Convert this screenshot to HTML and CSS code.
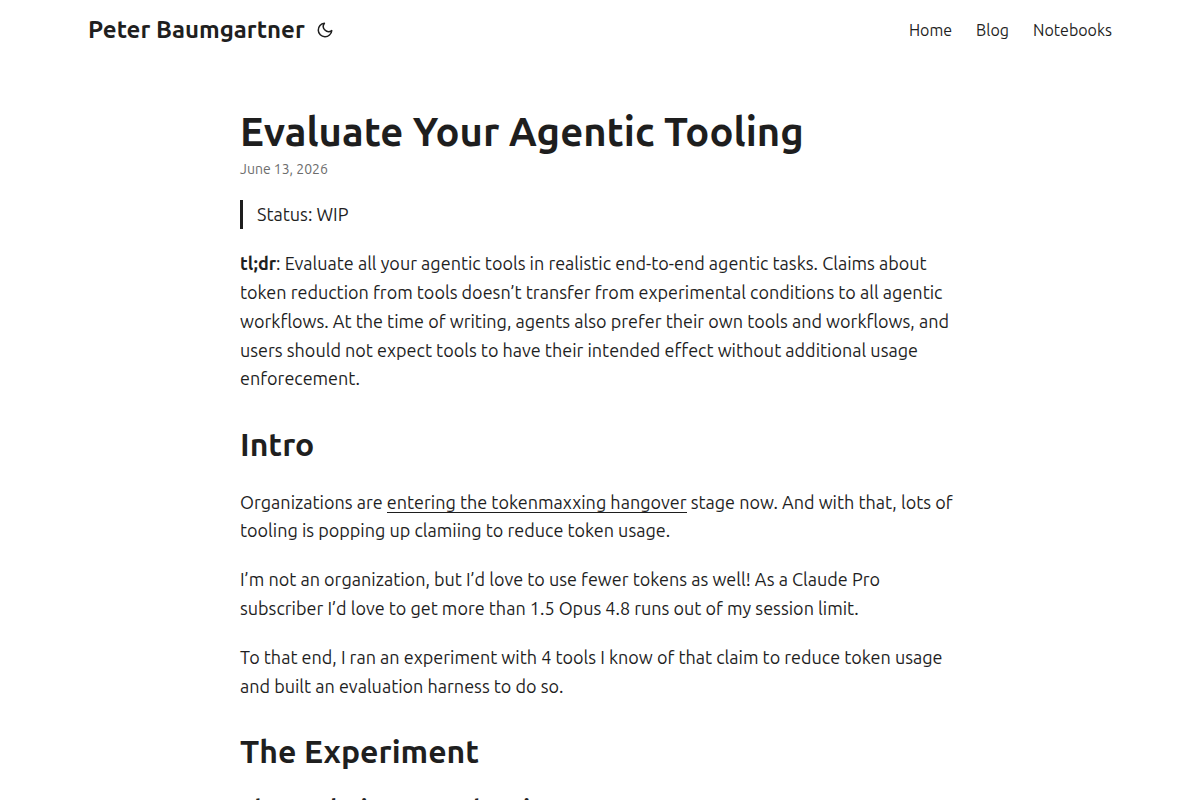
FILE: index.html
```html
<!DOCTYPE html>
<html lang="en">
<head>
<meta charset="utf-8">
<meta name="viewport" content="width=device-width, initial-scale=1">
<title>Evaluate Your Agentic Tooling | Peter Baumgartner</title>
<link rel="stylesheet" href="styles.css">
</head>
<body>
<header class="header">
  <nav class="nav">
    <div class="logo">
      <a class="logo-link" href="#">Peter Baumgartner</a>
      <button class="theme-toggle" type="button" aria-label="Toggle theme">
        <svg width="18" height="18" viewBox="0 0 24 24" fill="none" stroke="currentColor" stroke-width="2" stroke-linecap="round" stroke-linejoin="round" aria-hidden="true"><path d="M21 12.79A9 9 0 1 1 11.21 3 7 7 0 0 0 21 12.79z"/></svg>
      </button>
    </div>
    <ul class="menu">
      <li><a href="#">Home</a></li>
      <li><a href="#">Blog</a></li>
      <li><a href="#">Notebooks</a></li>
    </ul>
  </nav>
</header>
<main class="main">
  <article>
    <header class="post-header">
      <h1 class="post-title">Evaluate Your Agentic Tooling</h1>
      <div class="post-meta"><time datetime="2026-06-13">June 13, 2026</time></div>
    </header>
    <div class="post-content">
      <blockquote><p>Status: WIP</p></blockquote>
      <p><strong>tl;dr</strong>: Evaluate all your agentic tools in realistic end-to-end agentic tasks. Claims about token reduction from tools doesn’t transfer from experimental conditions to all agentic workflows. At the time of writing, agents also prefer their own tools and workflows, and users should not expect tools to have their intended effect without additional usage enforecement.</p>
      <h2>Intro</h2>
      <p>Organizations are <a href="#">entering the tokenmaxxing hangover</a> stage now. And with that, lots of tooling is popping up clamiing to reduce token usage.</p>
      <p>I’m not an organization, but I’d love to use fewer tokens as well! As a Claude Pro subscriber I’d love to get more than 1.5 Opus 4.8 runs out of my session limit.</p>
      <p>To that end, I ran an experiment with 4 tools I know of that claim to reduce token usage and built an evaluation harness to do so.</p>
      <h2>The Experiment</h2>
      <h3>The Ranks in Agents hosting</h3>
    </div>
  </article>
</main>
</body>
</html>
```
FILE: styles.css
```css
*, *::before, *::after { box-sizing: border-box; }
body {
  margin: 0;
  background: #fff;
  color: #1f1f1f;
  font: 18px/1.6 Ubuntu, "Noto Sans", "Open Sans", sans-serif;
  height: 100vh;
  overflow: hidden;
}
h1, h2, h3, p, ul, blockquote { margin: 0; padding: 0; }
a { color: inherit; text-decoration: none; }
.nav {
  display: flex;
  justify-content: space-between;
  align-items: center;
  max-width: 1072px;
  margin: 0 auto;
  padding: 0 24px;
  line-height: 60px;
}
.logo { display: flex; align-items: center; gap: 11px; }
.logo-link { font-size: 24px; font-weight: 700; }
.theme-toggle {
  display: flex;
  padding: 0;
  border: 0;
  background: none;
  color: #1e1e1e;
  cursor: pointer;
}
.menu { display: flex; gap: 24px; list-style: none; font-size: 16px; }
.main { max-width: 768px; margin: 0 auto; padding: 48px 24px; }
.post-header { margin-bottom: 20px; }
.post-title { margin-bottom: 2px; font-size: 40px; line-height: 1.2; color: #1e1e1e; }
.post-meta { font-size: 14px; color: #6c6c6c; }
.post-content p, .post-content blockquote { margin-bottom: 20px; }
.post-content blockquote { padding-left: 14px; border-left: 3px solid #1e1e1e; }
.post-content blockquote p { margin: 0; }
.post-content a { box-shadow: 0 1px 0 #1e1e1e; }
.post-content h2 { margin: 32px 0 24px; font-size: 32px; line-height: 1.2; }
.post-content h3 { margin: 24px 0 16px; font-size: 24px; line-height: 1.2; }
```
